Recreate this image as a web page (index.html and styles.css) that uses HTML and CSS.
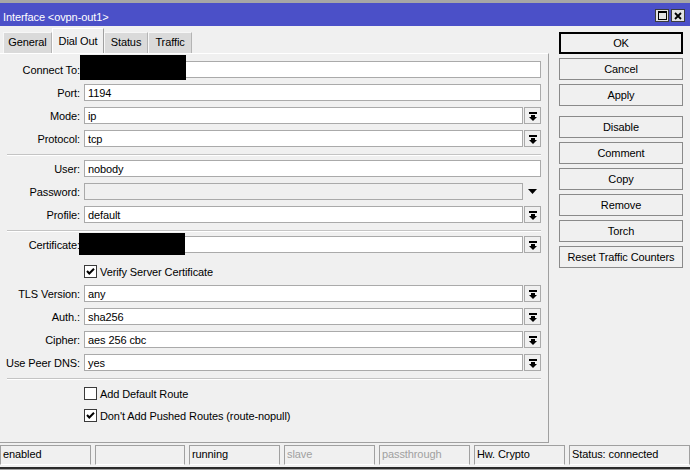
FILE: index.html
```html
<!DOCTYPE html>
<html lang="en">
<head>
  <meta charset="UTF-8">
  <title>Interface &lt;ovpn-out1&gt;</title>
  <link rel="stylesheet" href="styles.css">
</head>
<body>
  <div class="window">
    <div class="titlebar">
      <span class="title">Interface &lt;ovpn-out1&gt;</span>
      <div class="win-btns">
        <span class="win-btn">
          <svg width="9" height="9" viewBox="0 0 9 9"><rect x="0.5" y="0.5" width="8" height="8" fill="none" stroke="#000"/><rect x="0" y="0" width="9" height="2" fill="#000"/></svg>
        </span>
        <span class="win-btn">
          <svg width="8" height="8" viewBox="0 0 8 8"><path d="M1 1 L7 7 M7 1 L1 7" stroke="#000" stroke-width="1.8"/></svg>
        </span>
      </div>
    </div>

    <div class="main">
      <div class="left">
        <div class="tabs">
          <div class="tab w-general">General</div>
          <div class="tab active w-dial">Dial Out</div>
          <div class="tab w-status">Status</div>
          <div class="tab w-traffic">Traffic</div>
        </div>

        <div class="panel">
          <div class="row">
            <span class="label">Connect To:</span>
            <div class="field"><div class="input"></div></div>
            <div class="redact redact-connect"></div>
          </div>
          <div class="row">
            <span class="label">Port:</span>
            <div class="field"><div class="input">1194</div></div>
          </div>
          <div class="row">
            <span class="label">Mode:</span>
            <div class="field"><div class="input">ip</div><span class="drop"><svg width="8" height="9" viewBox="0 0 8 9"><rect x="0" y="0" width="8" height="2"/><rect x="2" y="3" width="4" height="2"/><polygon points="0,5 8,5 4,9"/></svg></span></div>
          </div>
          <div class="row">
            <span class="label">Protocol:</span>
            <div class="field"><div class="input">tcp</div><span class="drop"><svg width="8" height="9" viewBox="0 0 8 9"><rect x="0" y="0" width="8" height="2"/><rect x="2" y="3" width="4" height="2"/><polygon points="0,5 8,5 4,9"/></svg></span></div>
          </div>

          <div class="sep"></div>

          <div class="row">
            <span class="label">User:</span>
            <div class="field"><div class="input">nobody</div></div>
          </div>
          <div class="row">
            <span class="label">Password:</span>
            <div class="field"><div class="input disabled"></div><span class="drop-plain"><svg width="9" height="5" viewBox="0 0 9 5"><polygon points="0,0 9,0 4.5,5"/></svg></span></div>
          </div>
          <div class="row">
            <span class="label">Profile:</span>
            <div class="field"><div class="input">default</div><span class="drop"><svg width="8" height="9" viewBox="0 0 8 9"><rect x="0" y="0" width="8" height="2"/><rect x="2" y="3" width="4" height="2"/><polygon points="0,5 8,5 4,9"/></svg></span></div>
          </div>

          <div class="sep"></div>

          <div class="row">
            <span class="label">Certificate:</span>
            <div class="field"><div class="input"></div><span class="drop"><svg width="8" height="9" viewBox="0 0 8 9"><rect x="0" y="0" width="8" height="2"/><rect x="2" y="3" width="4" height="2"/><polygon points="0,5 8,5 4,9"/></svg></span></div>
            <div class="redact redact-cert"></div>
          </div>
          <div class="check-row first">
            <span class="box"><svg width="11" height="11" viewBox="0 0 11 11"><polyline points="2,5 4.3,7.5 9,2.8" fill="none" stroke="#000" stroke-width="2"/></svg></span>
            <span class="check-text">Verify Server Certificate</span>
          </div>
          <div class="row">
            <span class="label">TLS Version:</span>
            <div class="field"><div class="input">any</div><span class="drop"><svg width="8" height="9" viewBox="0 0 8 9"><rect x="0" y="0" width="8" height="2"/><rect x="2" y="3" width="4" height="2"/><polygon points="0,5 8,5 4,9"/></svg></span></div>
          </div>
          <div class="row">
            <span class="label">Auth.:</span>
            <div class="field"><div class="input">sha256</div><span class="drop"><svg width="8" height="9" viewBox="0 0 8 9"><rect x="0" y="0" width="8" height="2"/><rect x="2" y="3" width="4" height="2"/><polygon points="0,5 8,5 4,9"/></svg></span></div>
          </div>
          <div class="row">
            <span class="label">Cipher:</span>
            <div class="field"><div class="input">aes 256 cbc</div><span class="drop"><svg width="8" height="9" viewBox="0 0 8 9"><rect x="0" y="0" width="8" height="2"/><rect x="2" y="3" width="4" height="2"/><polygon points="0,5 8,5 4,9"/></svg></span></div>
          </div>
          <div class="row">
            <span class="label">Use Peer DNS:</span>
            <div class="field"><div class="input">yes</div><span class="drop"><svg width="8" height="9" viewBox="0 0 8 9"><rect x="0" y="0" width="8" height="2"/><rect x="2" y="3" width="4" height="2"/><polygon points="0,5 8,5 4,9"/></svg></span></div>
          </div>

          <div class="sep"></div>

          <div class="check-row after-sep">
            <span class="box"></span>
            <span class="check-text">Add Default Route</span>
          </div>
          <div class="check-row">
            <span class="box"><svg width="11" height="11" viewBox="0 0 11 11"><polyline points="2,5 4.3,7.5 9,2.8" fill="none" stroke="#000" stroke-width="2"/></svg></span>
            <span class="check-text">Don't Add Pushed Routes (route-nopull)</span>
          </div>
        </div>
      </div>

      <div class="actions">
        <div class="btn default">OK</div>
        <div class="btn">Cancel</div>
        <div class="btn spaced">Apply</div>
        <div class="btn">Disable</div>
        <div class="btn">Comment</div>
        <div class="btn">Copy</div>
        <div class="btn">Remove</div>
        <div class="btn">Torch</div>
        <div class="btn">Reset Traffic Counters</div>
      </div>
    </div>

    <div class="statusbar">
      <div class="cell">enabled</div>
      <div class="cell narrow"></div>
      <div class="cell">running</div>
      <div class="cell dim">slave</div>
      <div class="cell dim">passthrough</div>
      <div class="cell">Hw. Crypto</div>
      <div class="cell wide">Status: connected</div>
    </div>
  </div>
</body>
</html>
```

FILE: styles.css
```css
* {
  box-sizing: border-box;
}
body {
  margin: 0;
  background: #f0f0f0;
  font-family: "Liberation Sans", Arial, sans-serif;
  font-size: 11px;
  letter-spacing: -0.1px;
  color: #000;
}
.window {
  width: 690px;
  height: 470px;
  overflow: hidden;
  display: flex;
  flex-direction: column;
  border-bottom: 1px solid #a0a0a0;
}

/* title bar */
.titlebar {
  height: 26px;
  flex: none;
  border-top: 3px solid #a6a6a6;
  background: #4b50c8;
  color: #fff;
  display: flex;
  align-items: flex-start;
  padding: 0 5px 0 3px;
}
.title {
  flex: 1;
  margin-top: 8px;
  line-height: 13px;
}
.win-btns {
  display: flex;
  gap: 2px;
  margin-top: 6px;
}
.win-btn {
  width: 14px;
  height: 13px;
  border: 1px solid #3c3c3c;
  background: #e3e3e3;
  display: flex;
  align-items: center;
  justify-content: center;
}

/* main area */
.main {
  height: 417px;
  flex: none;
  display: flex;
}
.left {
  width: 549px;
  display: flex;
  flex-direction: column;
}
.tabs {
  height: 27px;
  display: flex;
  align-items: flex-end;
  padding-left: 3px;
}
.tab {
  height: 21px;
  border: 1px solid;
  border-bottom: none;
  border-color: #f7f7f7 #b4b4b4 transparent #f7f7f7;
  background: #dadada;
  text-align: center;
  padding-top: 3px;
  line-height: 13px;
}
.tab.active {
  height: 25px;
  background: #f0f0f0;
  border-color: #fff #a0a0a0 transparent #fff;
  padding-top: 6px;
}
.w-general { width: 49px; }
.w-dial { width: 52px; }
.w-status { width: 44px; }
.w-traffic { width: 44px; }

.panel {
  height: 390px;
  border-top: 1px solid #fff;
  border-right: 1px solid #a0a0a0;
  border-bottom: 1px solid #a0a0a0;
  padding: 4px 7px 0 0;
}
.row {
  position: relative;
  height: 23px;
  display: flex;
  align-items: center;
}
.label {
  width: 80px;
  flex: none;
  text-align: right;
  line-height: 13px;
  margin-top: 2px;
  white-space: nowrap;
}
.field {
  flex: 1;
  margin-left: 4px;
  display: flex;
  gap: 1px;
}
.input {
  flex: 1;
  height: 17px;
  border: 1px solid #aaa;
  background: #fff;
  padding: 1px 3px 0;
  line-height: 14px;
  white-space: nowrap;
  overflow: hidden;
}
.input.disabled {
  background: #f0f0f0;
}
.drop,
.drop-plain {
  width: 17px;
  height: 17px;
  flex: none;
  display: flex;
  align-items: center;
  justify-content: center;
}
.drop {
  border: 1px solid #aaa;
  background: #f0f0f0;
  padding-top: 1px;
}
.sep {
  margin: 4px 0 1px 7px;
  border-top: 1px solid #c4c4c4;
  border-bottom: 1px solid #fff;
}
.check-row {
  height: 22px;
  display: flex;
  align-items: center;
  gap: 3px;
  padding-left: 84px;
  line-height: 13px;
}
.check-row.first {
  margin-top: 4px;
}
.check-row.after-sep {
  margin-top: 2px;
}
.check-text {
  margin-top: 2px;
}
.box {
  width: 13px;
  height: 13px;
  border: 1px solid #3a3a3a;
  background: #fff;
  display: flex;
  align-items: center;
  justify-content: center;
}
.redact {
  position: absolute;
  background: #000;
}
.redact-connect {
  left: 80px;
  top: -3px;
  width: 106px;
  height: 25px;
}
.redact-cert {
  left: 79px;
  top: 0;
  width: 106px;
  height: 22px;
}

/* buttons */
.actions {
  flex: 1;
  padding: 6px 0 0 10px;
  display: flex;
  flex-direction: column;
  gap: 4px;
}
.btn {
  width: 124px;
  height: 22px;
  border: 1px solid #8a8a8a;
  background: #f0f0f0;
  text-align: center;
  line-height: 20px;
}
.btn.default {
  border: 2px solid #000;
  line-height: 18px;
}
.btn.spaced {
  margin-bottom: 6px;
}

/* status bar */
.statusbar {
  height: 26px;
  flex: none;
  display: flex;
  gap: 4px;
  padding: 2px 0;
  border-bottom: 2px solid #2b2b2b;
}
.cell {
  width: 91px;
  height: 20px;
  border: 1px solid;
  border-color: #a0a0a0 #a0a0a0 #fff #a0a0a0;
  padding-left: 2px;
  line-height: 17px;
  white-space: nowrap;
}
.cell.narrow { width: 90px; }
.cell.wide { flex: 1; }
.cell.dim { color: #a0a0a0; }
```
